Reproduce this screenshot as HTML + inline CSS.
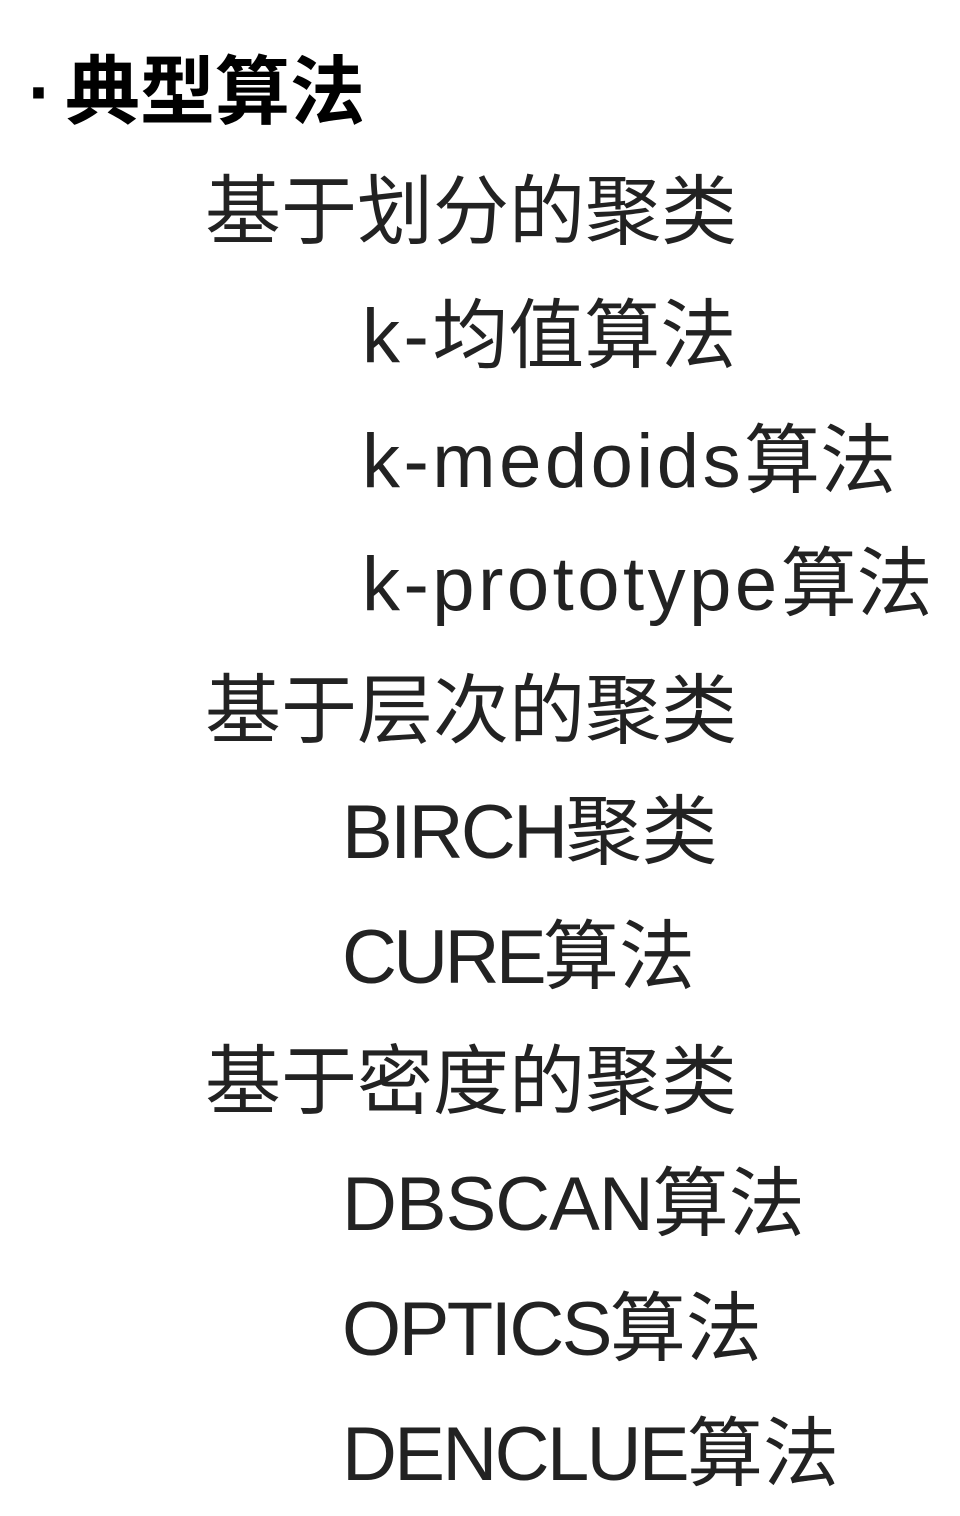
<!DOCTYPE html>
<html>
<head>
<meta charset="utf-8">
<style>
html,body{margin:0;padding:0;background:#fff;}
body{width:960px;height:1516px;position:relative;overflow:hidden;
font-family:"Liberation Sans","Noto Sans CJK SC",sans-serif;color:#222;}
.l{position:absolute;white-space:nowrap;font-size:76px;line-height:76px;}
.h{font-weight:bold;color:#000;font-size:75px;}
.lw{letter-spacing:3.5px;}
</style>
</head>
<body>
<div class="l h" style="left:28px;top:54px;">·</div>
<div class="l h" style="left:65px;top:54px;">典型算法</div>
<div class="l" style="left:205px;top:175px;">基于划分的聚类</div>
<div class="l" style="left:362px;top:299px;"><span class="lw">k-</span>均值算法</div>
<div class="l" style="left:362px;top:424px;"><span class="lw">k-medoids</span>算法</div>
<div class="l" style="left:362px;top:547px;"><span class="lw">k-prototype</span>算法</div>
<div class="l" style="left:205px;top:674px;">基于层次的聚类</div>
<div class="l" style="left:342px;top:795px;"><span style="letter-spacing:-2.6px">BIRCH</span>聚类</div>
<div class="l" style="left:342px;top:920px;"><span style="letter-spacing:-3.6px">CURE</span>算法</div>
<div class="l" style="left:205px;top:1045px;">基于密度的聚类</div>
<div class="l" style="left:342px;top:1167px;"><span style="letter-spacing:-1px">DBSCAN</span>算法</div>
<div class="l" style="left:342px;top:1292px;"><span style="letter-spacing:-2.5px">OPTICS</span>算法</div>
<div class="l" style="left:342px;top:1417px;"><span style="letter-spacing:-2.6px">DENCLUE</span>算法</div>
</body>
</html>
